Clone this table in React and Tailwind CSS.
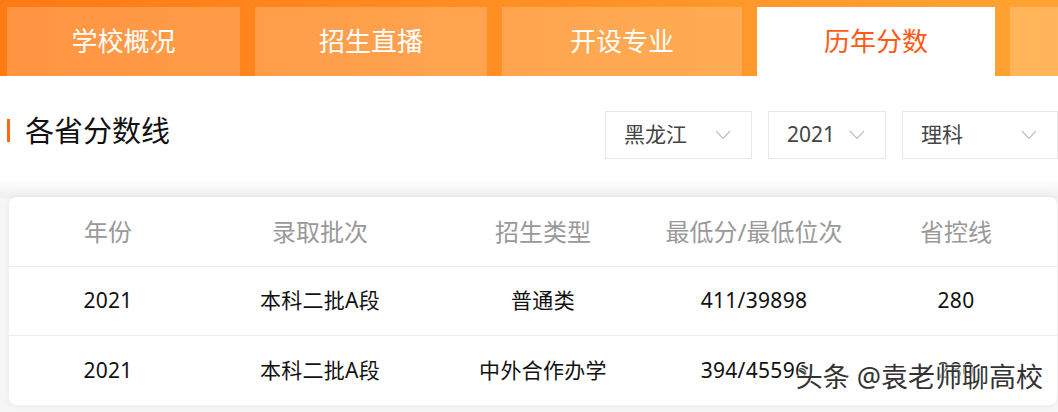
import React from 'react';

const tabs = [
    { label: '学校概况', w: 'w-[233px]' },
    { label: '招生直播', w: 'w-[232px]' },
    { label: '开设专业', w: 'w-[240px]' },
    { label: '历年分数', w: 'w-[238px]', active: true },
    { label: '', w: 'w-[60px]' },
];

const filtros = [
    { label: '黑龙江', w: 'w-[147px]' },
    { label: '2021', w: 'w-[118px]' },
    { label: '理科', w: 'w-[156px]' },
];

const filas = [
    ['2021', '本科二批A段', '普通类', '411/39898', '280'],
    ['2021', '本科二批A段', '中外合作办学', '394/45596', '280'],
];

const columnas = ['年份', '录取批次', '招生类型', '最低分/最低位次', '省控线'];

function Chevron() {
    return (
        <svg width="16" height="10" viewBox="0 0 16 10" fill="none" className="shrink-0">
            <path d="M1 1l7 7.5L15 1" stroke="#c4c4c4" strokeWidth="1.3" />
        </svg>
    );
}

export default function App() {
    return (
        <div className="w-[1058px] h-[412px] overflow-hidden bg-[#f6f6f6] font-['Noto_Sans','Noto_Sans_CJK_SC',sans-serif]">
            {/* Barra de pestañas */}
            <div className="h-[76px] pt-[7px] pl-[7px] flex gap-[15px] bg-gradient-to-r from-[#ff7a12] to-[#ffa332] overflow-hidden">
                {tabs.map((t, i) => (
                    <div
                        key={i}
                        className={`${t.w} shrink-0 h-full flex items-center justify-center text-[26px] ${t.active ? 'bg-white text-[#ff5a14]' : 'bg-white/20 text-white'}`}
                    >
                        {t.label}
                    </div>
                ))}
            </div>

            {/* Zona blanca con título y filtros */}
            <div className="bg-gradient-to-b from-white from-[85%] to-[#efefef] h-[122px] flex items-start justify-between">
                <div className="flex items-center mt-[40px] pl-[7px]">
                    <span className="w-[3px] h-[23px] bg-[#ff6a10]"></span>
                    <h1 className="ml-[15px] text-[29px] leading-none text-[#111]">各省分数线</h1>
                </div>
                <div className="flex gap-[16px] mt-[35px]">
                    {filtros.map((f, i) => (
                        <div
                            key={i}
                            className={`${f.w} h-[48px] bg-white border border-[#e8e8e8] flex items-center justify-between pl-[18px] pr-[20px] text-[21px] text-[#444]`}
                        >
                            <span>{f.label}</span>
                            <Chevron />
                        </div>
                    ))}
                </div>
            </div>

            {/* Tabla */}
            <div className="relative ml-[9px] mr-[1px] -mt-[1px] bg-white rounded-[8px] shadow-[0_0_10px_rgba(0,0,0,0.06)]">
                <div className="grid grid-cols-[198px_226px_220px_202px_1fr] h-[70px] items-center border-b border-[#ececec] text-[24px] text-[#999]">
                    {columnas.map(c => (
                        <div key={c} className="text-center">{c}</div>
                    ))}
                </div>
                {filas.map((fila, i) => (
                    <div
                        key={i}
                        className={`grid grid-cols-[198px_226px_220px_202px_1fr] h-[69px] items-center text-[21px] text-[#111] ${i === 0 ? 'border-b border-[#ececec]' : ''}`}
                    >
                        {fila.map((v, j) => (
                            <div key={j} className="text-center tracking-[0.3px]">{v}</div>
                        ))}
                    </div>
                ))}

                {/* Marca de agua */}
                <div className="absolute right-[14px] bottom-[8px] text-[27px] text-[#333] [text-shadow:0_0_2px_#fff,0_0_2px_#fff,0_0_3px_#fff]">
                    头条 @袁老师聊高校
                </div>
            </div>
        </div>
    );
}
